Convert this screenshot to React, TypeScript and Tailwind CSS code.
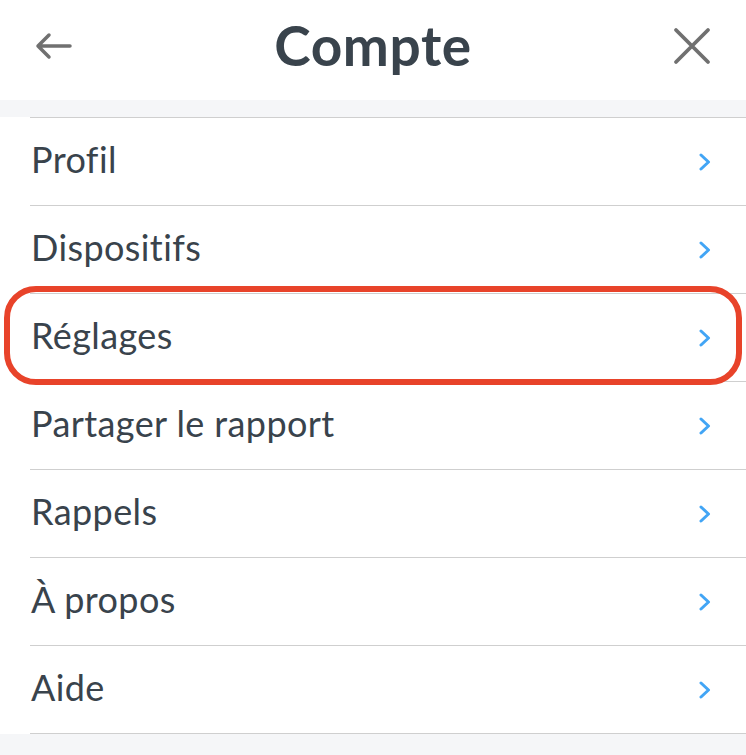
const items = ["Profil", "Dispositifs", "Réglages", "Partager le rapport", "Rappels", "À propos", "Aide"];

function Chevron() {
  return (
    <svg width="14" height="18" viewBox="0 0 14 18" fill="none">
      <path d="M3 2 L10.5 9 L3 16" stroke="#42a5f5" strokeWidth="3" strokeLinecap="round" strokeLinejoin="round" />
    </svg>
  );
}

function BackArrow() {
  return (
    <svg width="40" height="30" viewBox="0 0 40 30" fill="none">
      <path d="M36 15 H4 M15 4 L4 15 L15 26" stroke="#707070" strokeWidth="3.5" strokeLinecap="round" strokeLinejoin="round" />
    </svg>
  );
}

function CloseIcon() {
  return (
    <svg width="40" height="40" viewBox="0 0 40 40" fill="none">
      <path d="M4 4 L36 36 M36 4 L4 36" stroke="#707070" strokeWidth="3.8" strokeLinecap="round" />
    </svg>
  );
}

export default function App() {
  return (
    <div className="min-h-screen w-[746px] bg-[#f5f6f8] text-[#39434c]" style={{ fontFamily: "Lato, 'Noto Sans', sans-serif" }}>
      {/* Header */}
      <header className="h-[100px] bg-white flex items-center justify-between pl-[34px] pr-[34px]">
        <div className="w-[40px] flex items-center -mt-[8px]">
          <BackArrow />
        </div>
        <h1 className="text-[55px] font-bold leading-none -mt-[10px] tracking-[0.6px]">Compte</h1>
        <div className="w-[40px] flex items-center -mt-[8px]">
          <CloseIcon />
        </div>
      </header>

      <div className="h-[17px]" />

      {/* List */}
      <ul className="bg-white relative">
        {items.map((label) => (
          <li key={label} className="relative h-[88px] pl-[30px]">
            <div className="h-full border-t border-[#cfcfcf] flex items-center justify-between pr-[34px]">
              <span className="text-[36px] leading-none pl-[1px] -mt-[5px] tracking-[0.4px]">{label}</span>
              <Chevron />
            </div>
            {label === "Réglages" && (
              <div className="absolute z-10 left-[4px] right-[4px] -top-[7px] -bottom-[4px] border-6 border-[#e8432a] rounded-[32px] pointer-events-none" />
            )}
          </li>
        ))}
        <li className="h-px ml-[30px] bg-[#cfcfcf]" />
      </ul>
    </div>
  );
}
